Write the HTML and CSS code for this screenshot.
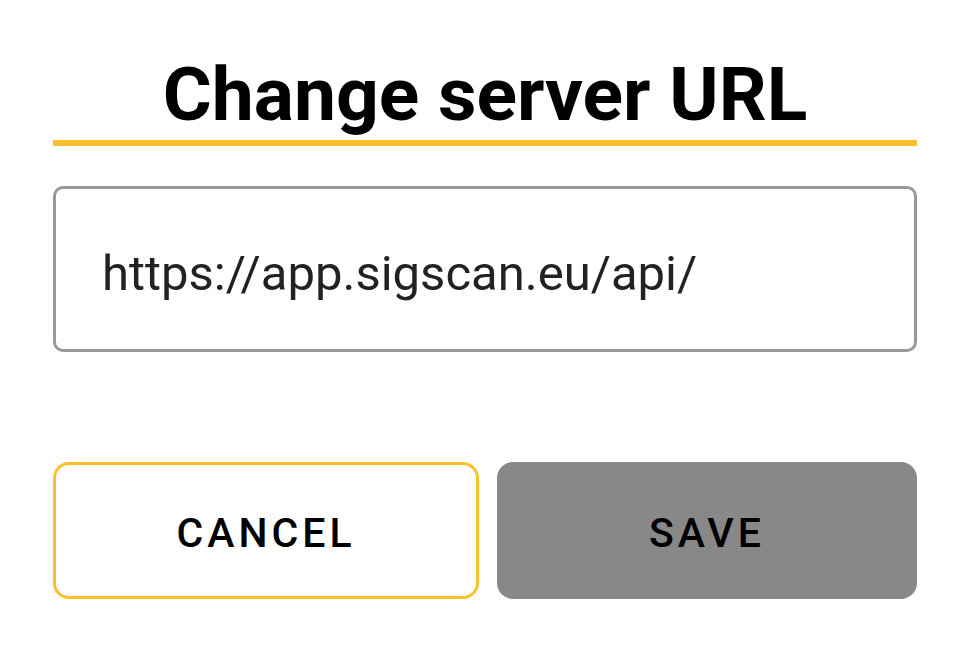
FILE: index.html
```html
<!DOCTYPE html>
<html lang="en">

<head>
    <meta charset="UTF-8">
    <meta name="viewport" content="width=device-width, initial-scale=1.0">
    <title>Change server URL</title>
    <link rel="stylesheet" href="styles.css">
</head>

<body>
    <div class="dialog">
        <h1 class="dialog-title">Change server URL</h1>

        <input class="url-input" type="text" id="serverUrl" value="https://app.sigscan.eu/api/">

        <div class="actions">
            <button type="button" class="btn btn-cancel">Cancel</button>
            <button type="button" class="btn btn-save">Save</button>
        </div>
    </div>
</body>

</html>
```

FILE: styles.css
```css
* {
    box-sizing: border-box;
}

body {
    font-family: Roboto, "Liberation Sans", Arial, sans-serif;
    margin: 0;
    padding: 0;
    background-color: white;
}

.dialog {
    padding: 48px 53px 0 53px;
}

.dialog-title {
    margin: 0;
    font-size: 75px;
    line-height: 92px;
    font-weight: 700;
    text-align: center;
    color: black;
    border-bottom: 6px solid #fbc02d;
}

.url-input {
    display: block;
    width: 100%;
    height: 166px;
    margin-top: 40px;
    padding: 8px 46px 0 46px;
    border: 3px solid #999999;
    border-radius: 10px;
    font-family: Roboto, "Liberation Sans", Arial, sans-serif;
    font-size: 49px;
    color: #222222;
    outline: none;
}

.actions {
    display: flex;
    gap: 18px;
    margin-top: 110px;
}

.btn {
    flex: 1 1 0;
    min-width: 0;
    height: 137px;
    padding-top: 5px;
    border-radius: 16px;
    font-family: Roboto, "Liberation Sans", Arial, sans-serif;
    font-size: 41px;
    font-weight: 500;
    letter-spacing: 4px;
    text-transform: uppercase;
    color: black;
    cursor: pointer;
}

.btn-cancel {
    background-color: white;
    border: 3px solid #fbc02d;
}

.btn-save {
    background-color: #888888;
    border: none;
}
```
